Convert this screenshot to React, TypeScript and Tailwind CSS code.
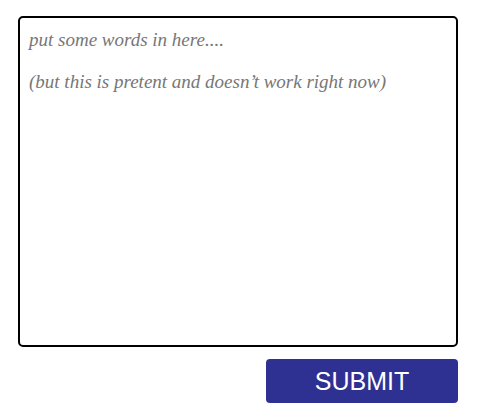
export default function App() {
  return (
    <div className="w-[480px] h-[418px] bg-white pt-4 pl-[18px] pr-[22px]">
      <textarea
        className="block w-full h-[331px] border-2 border-black rounded-[5px] px-[9px] py-[11px] resize-none outline-none text-[19px] leading-[21px] italic placeholder:text-[#777] text-[#333]"
        style={{ fontFamily: '"Liberation Serif", serif' }}
        placeholder={"put some words in here....\n\n(but this is pretent and doesn\u2019t work right now)"}
      />
      <div className="flex justify-end mt-3">
        <button
          className="w-[192px] h-[44px] bg-[#2e3192] rounded-[4px] text-white text-[25px] leading-none"
          style={{ fontFamily: '"Liberation Sans", Arial, sans-serif' }}
        >
          SUBMIT
        </button>
      </div>
    </div>
  );
}
